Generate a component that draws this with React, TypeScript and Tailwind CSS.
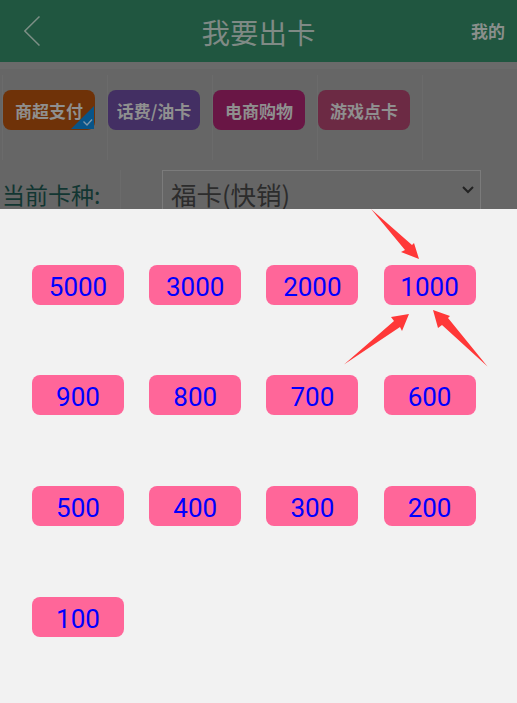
import React from "react";

const font = { fontFamily: '"Noto Sans CJK SC", sans-serif' };

const cats = [
  { label: "商超支付", bg: "bg-[#6f3208]", check: true },
  { label: "话费/油卡", bg: "bg-[#432f63]" },
  { label: "电商购物", bg: "bg-[#691645]" },
  { label: "游戏点卡", bg: "bg-[#6c2a44]" },
];

const amounts = [5000, 3000, 2000, 1000, 900, 800, 700, 600, 500, 400, 300, 200, 100];

function Arrow({ d }: { d: string }) {
  return <path d={d} fill="#ff3838" />;
}

export default function App() {
  return (
    <div
      className="relative h-[703px] w-[517px] overflow-hidden bg-[#666666]"
      style={font}
    >
      <header className="flex h-[62px] items-center justify-between bg-[#205640] pl-6 pr-3">
        <svg width="16" height="30" viewBox="0 0 16 30" fill="none">
          <path d="M15.5 0.5 L0.8 15 L15.5 29.5" stroke="#7d8f86" strokeWidth="1.5" />
        </svg>
        <h1 className="ml-[6px] pt-[2px] text-[28.5px] leading-none font-normal text-[#7f8a85]">我要出卡</h1>
        <span className="text-[17px] font-bold text-[#8a8f8c]">我的</span>
      </header>
      <div className="h-[7px] bg-[#6a6a6a]" />

      <div className="ml-[2px] flex h-[86px] pt-[6px]">
        {cats.map((c) => (
          <div key={c.label} className="h-[85px] w-[105px] border-l border-[#6b6b6b] pt-[15px]">
            <div
              className={`relative flex h-10 w-[92px] items-center justify-center rounded-lg pt-[2px] text-[17px] font-bold text-[#8f8f8f] ${c.bg}`}
            >
              {c.label}
              {c.check && (
                <svg className="absolute right-[1px] bottom-[1px]" width="23" height="23" viewBox="0 0 23 23">
                  <path d="M0 23 L23 0 V23 Z" fill="#085488" />
                  <path d="M12.5 15.5 L16 19 L21 13.5" fill="none" stroke="#7f98aa" strokeWidth="1.4" />
                </svg>
              )}
            </div>
          </div>
        ))}
        <div className="h-[85px] border-l border-[#6b6b6b]" />
      </div>

      <div className="flex h-[60px] pt-[15px]">
        <div className="w-[121px] border-r border-[#6b6b6b] pl-[2px] text-[23px] leading-[48px] text-[#123632]">
          当前卡种:
        </div>
        <div className="ml-[41px] flex h-10 w-[319px] items-start justify-between border border-[#7b7b7b] pr-[6px] pl-2 text-[25.5px] leading-[45px] text-[#2c2c2c]">
          <span>福卡(快销)</span>
          <svg className="mt-[15px]" width="12" height="8" viewBox="0 0 12 8" fill="none">
            <path d="M1 1 L6 6 L11 1" stroke="#222" strokeWidth="2" />
          </svg>
        </div>
      </div>

      <section className="absolute inset-x-0 top-[209px] bottom-0 bg-[#f2f2f2]">
        <div className="grid grid-cols-[repeat(4,92px)] gap-x-[25.2px] gap-y-[70.6px] pt-[55.8px] pl-[32px]">
          {amounts.map((a) => (
            <div
              key={a}
              className="flex h-10 items-center justify-center rounded-lg bg-[#ff6699] pt-[5px] text-[26px] text-[#0000ff]"
              style={{ fontFamily: 'Roboto, sans-serif' }}
            >
              {a}
            </div>
          ))}
        </div>
      </section>

      <svg className="absolute top-[209px] left-0" width="517" height="170" viewBox="0 209 517 170">
        <Arrow d="M371 209 L412 245 L414 243 L419 259 L401 252 L405 250 Z" />
        <Arrow d="M344 364.5 L394 321 L391 317 L409 314 L402 331 L400 327 Z" />
        <Arrow d="M487.5 366.5 L442 325 L438 328 L433 310 L450 316 L448 318 Z" />
      </svg>
    </div>
  );
}
